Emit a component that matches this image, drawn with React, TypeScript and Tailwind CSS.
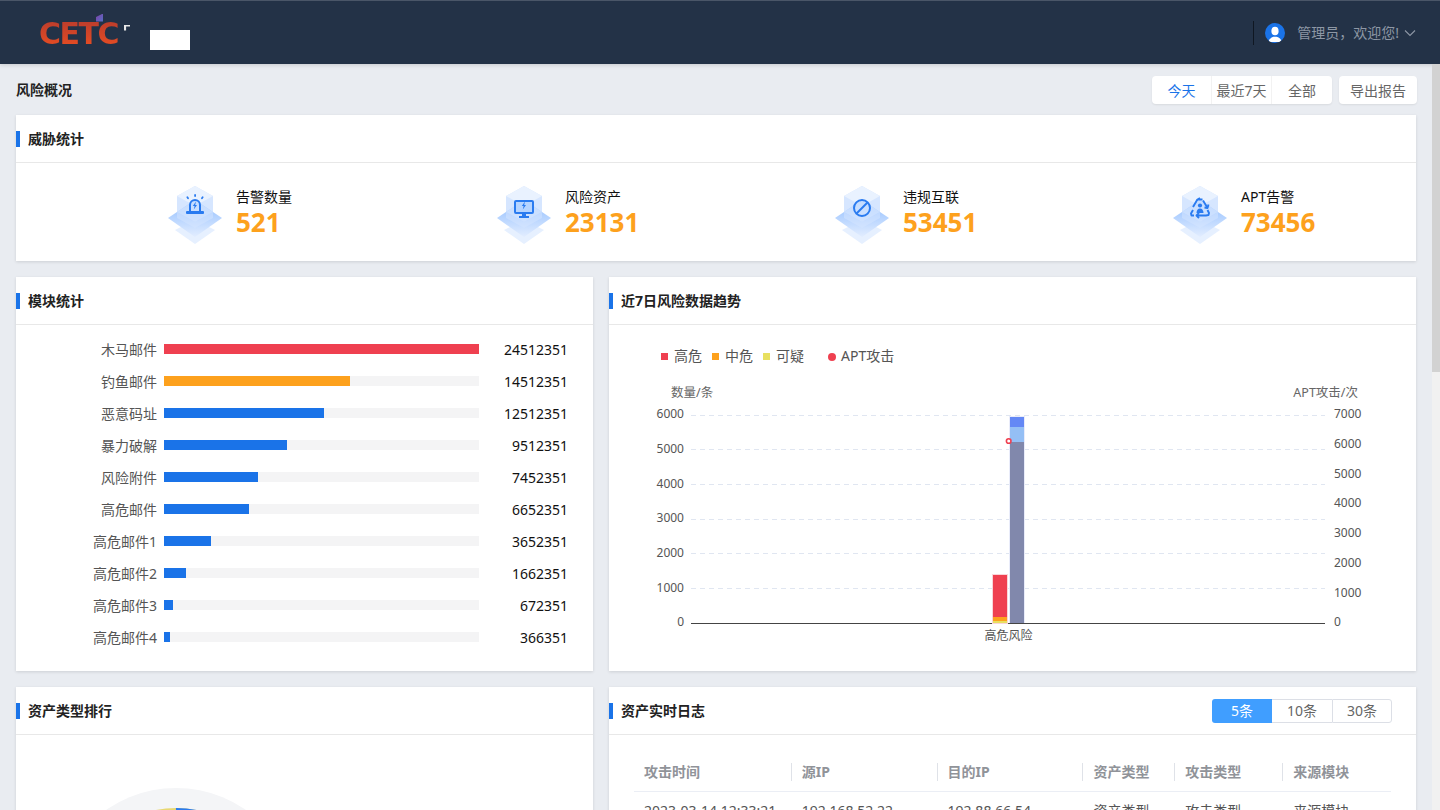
import type { ReactNode } from "react";

const FONT = "font-['Noto_Sans','Noto_Sans_CJK_SC',sans-serif]";

const stats = [
  { label: "告警数量", value: "521", width: "w-[329px]", icon: "alarm" },
  { label: "风险资产", value: "23131", width: "w-[338px]", icon: "monitor" },
  { label: "违规互联", value: "53451", width: "w-[338px]", icon: "ban" },
  { label: "APT告警", value: "73456", width: "w-[243px]", icon: "recycle" },
];

const modules = [
  { name: "木马邮件", value: "24512351", bar: "w-[315px]", color: "bg-[#ef4050]" },
  { name: "钓鱼邮件", value: "14512351", bar: "w-[186px]", color: "bg-[#fda11d]" },
  { name: "恶意码址", value: "12512351", bar: "w-[160px]", color: "bg-[#1a73e8]" },
  { name: "暴力破解", value: "9512351", bar: "w-[123px]", color: "bg-[#1a73e8]" },
  { name: "风险附件", value: "7452351", bar: "w-[94px]", color: "bg-[#1a73e8]" },
  { name: "高危邮件", value: "6652351", bar: "w-[85px]", color: "bg-[#1a73e8]" },
  { name: "高危邮件1", value: "3652351", bar: "w-[47px]", color: "bg-[#1a73e8]" },
  { name: "高危邮件2", value: "1662351", bar: "w-[22px]", color: "bg-[#1a73e8]" },
  { name: "高危邮件3", value: "672351", bar: "w-[9px]", color: "bg-[#1a73e8]" },
  { name: "高危邮件4", value: "366351", bar: "w-[6px]", color: "bg-[#1a73e8]" },
];

const logColumns = [
  { title: "攻击时间", cell: "2023-03-14 12:33:21", width: "w-[158px]" },
  { title: "源IP", cell: "192.168.52.22", width: "w-[146px]" },
  { title: "目的IP", cell: "192.88.66.54", width: "w-[146px]" },
  { title: "资产类型", cell: "资产类型", width: "w-[92px]" },
  { title: "攻击类型", cell: "攻击类型", width: "w-[108px]" },
  { title: "来源模块", cell: "来源模块", width: "w-[108px]" },
];

function HexIcon({ kind }: { kind: string }) {
  return (
    <svg width="54" height="60" viewBox="0 0 54 60" className="block shrink-0">
      <defs>
        <linearGradient id="plate" x1="0" y1="0" x2="0" y2="1">
          <stop offset="0" stopColor="#8fbdff" />
          <stop offset="1" stopColor="#e2edff" />
        </linearGradient>
      </defs>
      <polygon points="7,44 27,58 47,44 27,34" fill="#e6f0ff" />
      <polygon points="27,0 45,10 45,32 27,42 9,32 9,10" fill="#d6e6ff" />
      <polygon points="9,10 27,0 45,10 27,20" fill="#e9f2ff" />
      <polygon points="0,32 27,14 54,32 27,51" fill="url(#plate)" />
      <polygon points="9,26 27,36 45,26 45,32 27,42 9,32" fill="#d6e6ff" fillOpacity="0.5" />
      <polygon points="27,14 45,26 27,36 9,26" fill="#d6e6ff" fillOpacity="0.75" />
      {kind === "alarm" && (
        <g fill="#2a7bf0">
          <rect x="18" y="25" width="18" height="3" rx="1" />
          <path d="M21 25v-6a6 6 0 0 1 12 0v6h-2v-6a4 4 0 0 0-8 0v6z" />
          <path d="M28 15.500l-3.200 4.500h1.800l-.8 3.500 3.200-4.500h-1.800z" />
          <rect x="26.200" y="8" width="1.800" height="3" rx=".9" />
          <rect x="18.800" y="10.200" width="1.800" height="3" rx=".9" transform="rotate(-35 19.700 11.700)" />
          <rect x="33.400" y="10.200" width="1.800" height="3" rx=".9" transform="rotate(35 34.300 11.700)" />
        </g>
      )}
      {kind === "monitor" && (
        <g>
          <rect x="18" y="15" width="18" height="12" rx="1" fill="#b6d4ff" stroke="#2a7bf0" strokeWidth="2" />
          <path d="M25 28h4v2h3v2h-10v-2h3z" fill="#2a7bf0" />
          <path d="M28 15.500l-3.200 4.500h1.800l-.8 3.500 3.200-4.500h-1.800z" fill="#2a7bf0" />
        </g>
      )}
      {kind === "ban" && (
        <g fill="none" stroke="#2a7bf0" strokeWidth="2">
          <circle cx="27" cy="22" r="8" />
          <path d="M21.500 27.500l11-11" />
        </g>
      )}
      {kind === "recycle" && (
        <g>
          <g fill="none" stroke="#2a7bf0" strokeWidth="1.900" strokeLinejoin="round">
            <path d="M24.500 13.500l-1 1.500-3.500 6" />
            <path d="M29.500 13.500h-5l2.500-1.500" />
            <path d="M30 14.500l4 6.500" />
            <path d="M31.500 21.500l3 .5 1-3.500" />
            <path d="M21 29.500h-2.500l-.5-2 2-3.500" />
            <path d="M24 29.500h9l2.500-.5.500-2-1.500-3" />
            <path d="M26 27l-2.500 2.500 2.500 2.500" />
          </g>
          <circle cx="27" cy="19.500" r="2.100" fill="#2a7bf0" />
          <path d="M23.500 27c0-2.800 1.400-4.600 3.500-4.600s3.500 1.800 3.500 4.600z" fill="#2a7bf0" />
        </g>
      )}
    </svg>
  );
}

function Card({
  title,
  right,
  className,
  children,
}: {
  title: string;
  right?: ReactNode;
  className?: string;
  children: ReactNode;
}) {
  return (
    <section className={`bg-white shadow-[0_1px_3px_rgba(0,0,0,0.12)] ${className ?? ""}`}>
      <div className="h-[48px] border-b border-[#e8e8e8] flex items-center justify-between">
        <div className="flex items-center">
          <span className="w-[4px] h-[16px] bg-[#1a73e8]" />
          <h2 className="ml-[8px] text-[14px] font-bold text-[#222]">{title}</h2>
        </div>
        {right}
      </div>
      {children}
    </section>
  );
}

function TrendChart() {
  const leftAxis = [
    [6000, 414, 415.5],
    [5000, 449, 449.5],
    [4000, 484, 484.5],
    [3000, 518, 519.5],
    [2000, 553, 553.5],
    [1000, 588, 588.5],
  ];
  const rightAxis = [
    [7000, 414],
    [6000, 444],
    [5000, 474],
    [4000, 503],
    [3000, 533],
    [2000, 563],
    [1000, 593],
    [0, 622],
  ];
  return (
    <svg viewBox="609 325 807 346" width="807" height="346" className="block">
      <rect x="661" y="353" width="7" height="7" fill="#ef4050" />
      <text x="674" y="361" fontSize="14" fill="#555">高危</text>
      <rect x="712" y="353" width="7" height="7" fill="#fda11d" />
      <text x="725" y="361" fontSize="14" fill="#555">中危</text>
      <rect x="763" y="353" width="7" height="7" fill="#e8e060" />
      <text x="776" y="361" fontSize="14" fill="#555">可疑</text>
      <circle cx="832" cy="357" r="4" fill="#ef4050" />
      <text x="841" y="361" fontSize="14" fill="#555">APT攻击</text>

      <text x="671" y="397" fontSize="12.500" fill="#666">数量/条</text>
      <text x="1358" y="397" fontSize="12.500" fill="#666" textAnchor="end">APT攻击/次</text>

      {leftAxis.map(([label, y, lineY]) => (
        <g key={label}>
          <line x1="691" x2="1325" y1={lineY} y2={lineY} stroke="#e0e6f1" strokeDasharray="5 4" />
          <text x="684" y={y + 4} fontSize="12" fill="#555" textAnchor="end">{label}</text>
        </g>
      ))}
      <text x="684" y="626" fontSize="12" fill="#555" textAnchor="end">0</text>
      {rightAxis.map(([label, y]) => (
        <text key={label} x="1334" y={y + 4} fontSize="12" fill="#555">{label}</text>
      ))}
      <line x1="691" x2="1325" y1="623.500" y2="623.500" stroke="#444" />

      <rect x="992" y="574" width="16" height="50" fill="#f9d5d9" />
      <rect x="993" y="575" width="14" height="42" fill="#ef4050" />
      <rect x="993" y="617" width="14" height="4" fill="#fda11d" />
      <rect x="993" y="621" width="14" height="2" fill="#e8e060" />

      <rect x="1009" y="416" width="16" height="207" fill="#e9ecfa" />
      <rect x="1010" y="417" width="14" height="10" fill="#6488f5" />
      <rect x="1010" y="427" width="14" height="15" fill="#94bff5" />
      <rect x="1010" y="442" width="14" height="181" fill="#8188ac" />

      <circle cx="1008.700" cy="441" r="2.300" fill="#fff" stroke="#ef4050" strokeWidth="1.600" />
      <text x="1008.500" y="640" fontSize="12" fill="#555" textAnchor="middle">高危风险</text>
    </svg>
  );
}

export default function App() {
  return (
    <div className={`${FONT} h-[810px] overflow-hidden bg-[#e9ecf1] flex flex-col`}>
      <header className="h-[64px] shrink-0 bg-[#233247] border-t border-[#4a5668] shadow-[0_1px_4px_rgba(0,0,0,0.15)] flex items-center">
        <div className="relative ml-[39px] w-[80px] h-[30px] mt-[2px]">
          <span className="block font-['DejaVu_Sans',sans-serif] font-bold text-[30px] leading-[30px] tracking-[-1.500px] text-transparent bg-clip-text bg-gradient-to-b from-[#b93c2c] to-[#ea4e20]">
            CETC
          </span>
          <span className="absolute left-[57px] top-[-5px] w-[7px] h-[8px] bg-gradient-to-br from-[#7b3fa8] to-[#4f6fc4] [clip-path:polygon(100%_0,100%_100%,0_100%,0_45%)]" />
        </div>
        <span className="ml-[5px] mt-[-10px] w-[6px] h-[6px] bg-[#e8e8e8] [clip-path:polygon(0_0,100%_0,100%_35%,35%_35%,35%_100%,0_100%)]" />
        <div className="ml-[20px] mt-[14px] w-[40px] h-[20px] bg-white" />
        <div className="ml-auto mr-[24px] flex items-center">
          <span className="w-px h-[24px] bg-[#0f1722] mr-[11px]" />
          <span className="w-[20px] h-[20px] rounded-full bg-[#1a73e8] overflow-hidden relative">
            <svg viewBox="0 0 20 20" width="20" height="20" className="absolute inset-0">
              <ellipse cx="10" cy="8" rx="3.600" ry="4.300" fill="#fff" />
              <path d="M3.500 19c.3-3.500 3-4.500 5-5.200h3c2 .7 4.700 1.700 5 5.200z" fill="#fff" />
            </svg>
          </span>
          <span className="ml-[12px] text-[14px] text-[#8d97a5]">管理员，欢迎您!</span>
          <svg viewBox="0 0 12 8" width="12" height="8" className="ml-[5px]">
            <path d="M1 1.500l5 5 5-5" fill="none" stroke="#8d97a5" strokeWidth="1.100" />
          </svg>
        </div>
      </header>

      <div className="flex-1 flex min-h-0">
        <main className="w-[1432px] px-[16px]">
          <div className="h-[51px] flex items-center justify-between">
            <h1 className="text-[14px] font-bold text-[#222]">风险概况</h1>
            <div className="flex items-center gap-[7px] mr-[-1px] mt-[1px]">
              <div className="flex h-[28px] bg-white rounded-[4px] shadow-[0_1px_2px_rgba(0,0,0,0.08)] text-[14px] text-[#666] overflow-hidden">
                <button className="w-[60px] text-[#1a73e8] border-r border-[#f2f2f2]">今天</button>
                <button className="w-[60px] border-r border-[#f2f2f2] whitespace-nowrap">最近7天</button>
                <button className="w-[60px]">全部</button>
              </div>
              <button className="w-[78px] h-[28px] bg-white rounded-[4px] shadow-[0_1px_2px_rgba(0,0,0,0.08)] text-[14px] text-[#666]">
                导出报告
              </button>
            </div>
          </div>

          <Card title="威胁统计" className="h-[146px]">
            <div className="flex pl-[152px] pt-[23px]">
              {stats.map((s) => (
                <div key={s.label} className={`${s.width} flex`}>
                  <HexIcon kind={s.icon} />
                  <div className="ml-[14px]">
                    <div className="text-[14px] leading-[21px] text-[#111]">{s.label}</div>
                    <div className="text-[26px] leading-[30px] font-bold text-[#fda11d]">{s.value}</div>
                  </div>
                </div>
              ))}
            </div>
          </Card>

          <div className="mt-[16px] flex gap-[16px]">
            <Card title="模块统计" className="w-[577px] h-[394px]">
              <div className="pt-[8px]">
                {modules.map((m) => (
                  <div key={m.name} className="h-[32px] flex items-center">
                    <span className="w-[141px] text-right text-[14px] text-[#555]">{m.name}</span>
                    <span className="ml-[7px] w-[315px] h-[10px] bg-[#f4f4f5]">
                      <span className={`block h-full ${m.bar} ${m.color}`} />
                    </span>
                    <span className="w-[89px] text-right text-[14px] text-[#111]">{m.value}</span>
                  </div>
                ))}
              </div>
            </Card>
            <Card title="近7日风险数据趋势" className="w-[807px] h-[394px]">
              <TrendChart />
            </Card>
          </div>

          <div className="mt-[16px] flex gap-[16px]">
            <Card title="资产类型排行" className="w-[577px] h-[400px]">
              <div className="pl-[38px] pt-[53px]">
                <svg viewBox="0 0 244 244" width="244" height="244" className="block">
                  <circle cx="122" cy="122" r="122" fill="#f4f5f7" />
                  <circle cx="122" cy="122" r="92" fill="none" stroke="#e8d873" strokeWidth="20" />
                  <path d="M122 30a92 92 0 0 1 40 9" fill="none" stroke="#2a7bf0" strokeWidth="20" />
                </svg>
              </div>
            </Card>
            <Card
              title="资产实时日志"
              className="w-[807px] h-[400px]"
              right={
                <div className="mr-[24px] flex h-[24px] text-[14px] text-[#666]">
                  <button className="w-[60px] bg-[#409eff] text-white rounded-l-[3px]">5条</button>
                  <button className="w-[60px] border-y border-[#dcdfe6]">10条</button>
                  <button className="w-[60px] border border-[#dcdfe6] rounded-r-[3px]">30条</button>
                </div>
              }
            >
              <div className="mx-[25px] mt-[19px]">
                <div className="flex h-[38px] border-b border-[#ebeef5] items-center pb-[2px]">
                  {logColumns.map((c, i) => (
                    <div
                      key={c.title}
                      className={`${c.width} pl-[10px] h-[18px] leading-[18px] text-[14px] font-bold text-[#909399] ${i < logColumns.length - 1 ? "border-r border-[#dfe2e8]" : ""}`}
                    >
                      {c.title}
                    </div>
                  ))}
                </div>
                <div className="flex h-[36px] items-center">
                  {logColumns.map((c) => (
                    <div key={c.title} className={`${c.width} pl-[10px] text-[14px] text-[#555] whitespace-nowrap`}>
                      {c.cell}
                    </div>
                  ))}
                </div>
              </div>
            </Card>
          </div>
        </main>
        <div className="w-[8px] bg-[#f1f1f1]">
          <div className="h-[308px] bg-[#d2d2d2]" />
        </div>
      </div>
    </div>
  );
}
